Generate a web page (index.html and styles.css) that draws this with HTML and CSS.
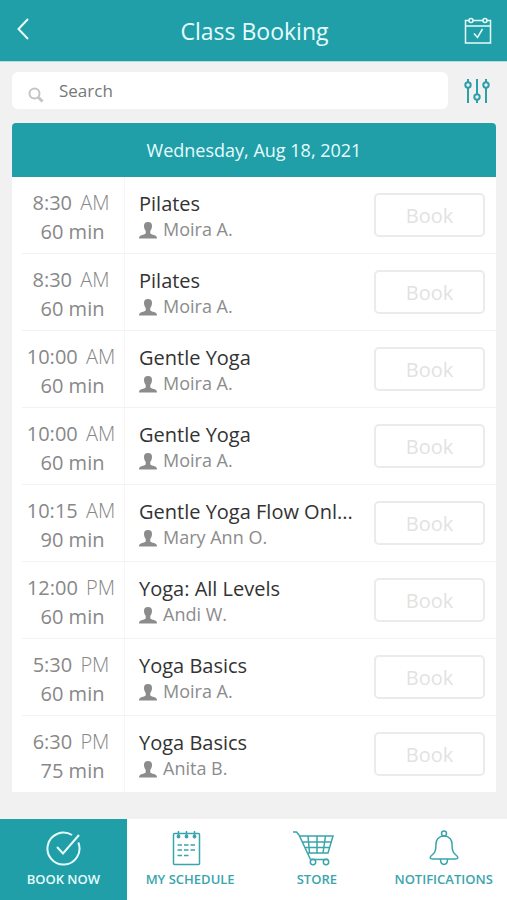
FILE: index.html
```html
<!DOCTYPE html>
<html lang="en">
<head>
<meta charset="utf-8">
<meta name="viewport" content="width=device-width, initial-scale=1">
<title>Class Booking</title>
<link rel="stylesheet" href="styles.css">
</head>
<body>
<svg class="defs" aria-hidden="true">
  <symbol id="person" viewBox="0 0 18 17">
    <path d="M9 0C6.200 0 4.800 1.600 5 4.200c.1 1.800.7 3.400 1.700 4.600v2.400c-.5 1-1.900 1.300-3.600 1.800C1 13.700 0 14.200 0 16.600h18c0-2.400-1-2.900-3.100-3.600-1.700-.5-3.100-.8-3.600-1.800V8.800c1-1.200 1.600-2.800 1.700-4.600C13.200 1.600 11.800 0 9 0z"/>
  </symbol>
</svg>
<header class="topbar">
  <button class="icon-button" type="button" aria-label="Back">
    <svg width="12" height="22" viewBox="0 0 12 22"><path d="M11 1 1.500 11 11 21"/></svg>
  </button>
  <h1>Class Booking</h1>
  <button class="icon-button" type="button" aria-label="Calendar">
    <svg width="28" height="28" viewBox="0 0 28 28">
      <path d="M5 3.500H1.500v22.500h25V3.500H23M9 3.500h10M1.500 9h25M10 16.500l3.500 4 5-8.500"/>
      <circle cx="7" cy="3.500" r="2"/><circle cx="21" cy="3.500" r="2"/>
    </svg>
  </button>
</header>
<main>
  <form class="search">
    <label class="search-box">
      <svg width="16" height="16" viewBox="0 0 16 16"><circle cx="6.500" cy="6.500" r="5"/><path d="M10.500 10.500l4 4" stroke-width="3"/></svg>
      <input type="text" placeholder="Search" aria-label="Search">
    </label>
    <button class="icon-button filter" type="button" aria-label="Filter">
      <svg width="26" height="26" viewBox="0 0 26 26">
        <path d="M4 1v3M4 9.500V25M13 1v15.500M13 22v3M22 1v3M22 9.500V25"/>
        <circle cx="4" cy="7" r="2.700"/><circle cx="13" cy="19" r="2.700"/><circle cx="22" cy="7" r="2.700"/>
      </svg>
    </button>
  </form>
  <section class="schedule">
    <h2>Wednesday, Aug 18, 2021</h2>
    <ul>
      <li><div class="time"><p>8:30 <span>AM</span></p><p class="length">60 min</p></div><div class="info"><h3>Pilates</h3><p><svg><use href="#person"/></svg>Moira A.</p></div><button class="book" type="button">Book</button></li>
      <li><div class="time"><p>8:30 <span>AM</span></p><p class="length">60 min</p></div><div class="info"><h3>Pilates</h3><p><svg><use href="#person"/></svg>Moira A.</p></div><button class="book" type="button">Book</button></li>
      <li><div class="time"><p>10:00 <span>AM</span></p><p class="length">60 min</p></div><div class="info"><h3>Gentle Yoga</h3><p><svg><use href="#person"/></svg>Moira A.</p></div><button class="book" type="button">Book</button></li>
      <li><div class="time"><p>10:00 <span>AM</span></p><p class="length">60 min</p></div><div class="info"><h3>Gentle Yoga</h3><p><svg><use href="#person"/></svg>Moira A.</p></div><button class="book" type="button">Book</button></li>
      <li><div class="time"><p>10:15 <span>AM</span></p><p class="length">90 min</p></div><div class="info"><h3>Gentle Yoga Flow Onl...</h3><p><svg><use href="#person"/></svg>Mary Ann O.</p></div><button class="book" type="button">Book</button></li>
      <li><div class="time"><p>12:00 <span>PM</span></p><p class="length">60 min</p></div><div class="info"><h3>Yoga: All Levels</h3><p><svg><use href="#person"/></svg>Andi W.</p></div><button class="book" type="button">Book</button></li>
      <li><div class="time"><p>5:30 <span>PM</span></p><p class="length">60 min</p></div><div class="info"><h3>Yoga Basics</h3><p><svg><use href="#person"/></svg>Moira A.</p></div><button class="book" type="button">Book</button></li>
      <li><div class="time"><p>6:30 <span>PM</span></p><p class="length">75 min</p></div><div class="info"><h3>Yoga Basics</h3><p><svg><use href="#person"/></svg>Anita B.</p></div><button class="book" type="button">Book</button></li>
    </ul>
  </section>
</main>
<nav class="tabs">
  <a class="active" href="#book">
    <svg width="36" height="36" viewBox="0 0 36 36"><path d="M27 5A16 16 0 1 0 33.300 12.500M12 17l6 6.500L34 5"/></svg>
    Book now
  </a>
  <a href="#schedule">
    <svg width="44" height="36" viewBox="0 0 44 36">
      <rect x="5.500" y="3.500" width="26" height="31" rx="1"/>
      <path d="M10.500 1v5M18.500 1v5M26.500 1v5"/>
      <path d="M9.500 15h4.500M16 15h4.500M22.500 15h4.500M9.500 20h4.500M16 20h4.500M22.500 20h4.500M9.500 25.500h4.500M16 25.500h4.500"/>
      <g fill="currentColor"><circle cx="10.500" cy="6.500" r="1.200"/><circle cx="18.500" cy="6.500" r="1.200"/><circle cx="26.500" cy="6.500" r="1.200"/></g>
    </svg>
    My schedule
  </a>
  <a href="#store">
    <svg width="50" height="36" viewBox="0 0 50 36">
      <path d="M1 2h3.500L7 5l11.500 24.500M7.500 6H41l-5 17H15.500M10 12h29M13 17.500h24.500M16 6l1.500 17M25 6v17M33.500 6 31 23M18.500 29.500H36"/>
      <circle cx="21" cy="32" r="2.700"/><circle cx="34" cy="32" r="2.700"/>
    </svg>
    Store
  </a>
  <a href="#notifications">
    <svg width="36" height="36" viewBox="0 0 36 36">
      <circle cx="18" cy="3.500" r="2.500"/>
      <path d="M18 6c-5.500 0-8 4-8 8 0 7-1 9-5 12-1.500 1.500-1 3 1.500 3h23c2.500 0 3-1.500 1.500-3-4-3-5-5-5-12 0-4-2.500-8-8-8zM14.500 29.500c0 6.500 7 6.500 7 0"/>
    </svg>
    Notifications
  </a>
</nav>
</body>
</html>
```
FILE: styles.css
```css
* { box-sizing: border-box; }
body {
  margin: 0;
  min-height: 100vh;
  display: flex;
  flex-direction: column;
  background: #f1f1f1;
  color: #333;
  font-family: "Open Sans", "Noto Sans", sans-serif;
}
h1, h2, h3, p, ul { margin: 0; padding: 0; font-weight: 400; }
ul { list-style: none; }
svg { fill: none; stroke: currentColor; stroke-width: 1.500; display: block; flex: none; }
.defs { position: absolute; width: 0; height: 0; }
.icon-button { border: 0; padding: 0; background: none; color: inherit; }

.topbar {
  display: grid;
  grid-template-columns: 28px 1fr 28px;
  align-items: center;
  height: 62px;
  padding: 0 15px 0 17px;
  border-bottom: 1px solid #b5dde0;
  background: #209fa9;
  color: #e6fcfc;
}
.topbar h1 { font-size: 23px; line-height: 32px; text-align: center; }
.topbar button:first-child svg { stroke-width: 2; margin-bottom: 4px; }

main { flex: 1; padding: 10px 11px 26px 12px; }
.search { display: flex; align-items: center; justify-content: space-between; margin-bottom: 14px; }
.search-box {
  flex: 1;
  display: flex;
  align-items: center;
  gap: 15px;
  height: 37px;
  padding: 0 16px;
  border-radius: 6px;
  background: #fff;
}
.search-box svg { color: #c4c4c4; stroke-width: 2; margin-top: 8px; }
.search-box input {
  flex: 1;
  min-width: 0;
  border: 0;
  outline: 0;
  padding: 0;
  background: none;
  font: 17px/24px "Open Sans", "Noto Sans", sans-serif;
  color: #777;
}
.search-box input::placeholder { color: #777; opacity: 1; }
.filter { margin: 0 6px 0 16px; color: #2c9fa8; }
.filter svg { stroke-width: 2; }

.schedule { border-radius: 4px 4px 0 0; overflow: hidden; background: #fff; }
.schedule h2 {
  padding: 15px 0 14px;
  background: #209fa9;
  color: #e6fcfc;
  font-size: 18px;
  line-height: 25px;
  text-align: center;
}
.schedule li { display: flex; align-items: center; height: 77px; margin-left: 10px; padding-right: 11px; border-bottom: 1px solid #f1f3f3; }
.schedule li:last-child { height: 76px; border: 0; }
.time { width: 103px; height: 100%; padding: 11px 4px 0 0; border-right: 1px solid #f6f6f6; color: #888; text-align: center; font-size: 20px; line-height: 29px; }
.time span { margin-left: 3px; font-weight: 300; }
.length { padding-left: 3px; }
.info { flex: 1; min-width: 0; align-self: flex-start; padding: 13px 10px 0 14px; }
.info h3 { font-size: 20px; line-height: 27px; white-space: nowrap; }
.info p { display: flex; align-items: center; gap: 6px; color: #8c8c8c; font-size: 18px; line-height: 24px; }
.info svg { width: 18px; height: 17px; margin-top: 2px; fill: #8c8c8c; stroke: none; }
.book {
  width: 111px;
  height: 44px;
  padding: 1px 0 0;
  border: 2px solid #ebebeb;
  border-radius: 5px;
  background: #fff;
  color: #e2e2e2;
  font: 20px/26px "Open Sans", "Noto Sans", sans-serif;
}

.tabs { display: grid; grid-template-columns: repeat(4, 1fr); height: 81px; background: #fff; }
.tabs a {
  display: flex;
  flex-direction: column;
  align-items: center;
  gap: 4px;
  padding-top: 11px;
  color: #3aa5ad;
  font-size: 13px;
  font-weight: 600;
  line-height: 18px;
  text-decoration: none;
  text-transform: uppercase;
  white-space: nowrap;
}
.tabs .active { background: #209fa9; color: #e6fcfc; }
.tabs .active svg { stroke-width: 2; }
```
